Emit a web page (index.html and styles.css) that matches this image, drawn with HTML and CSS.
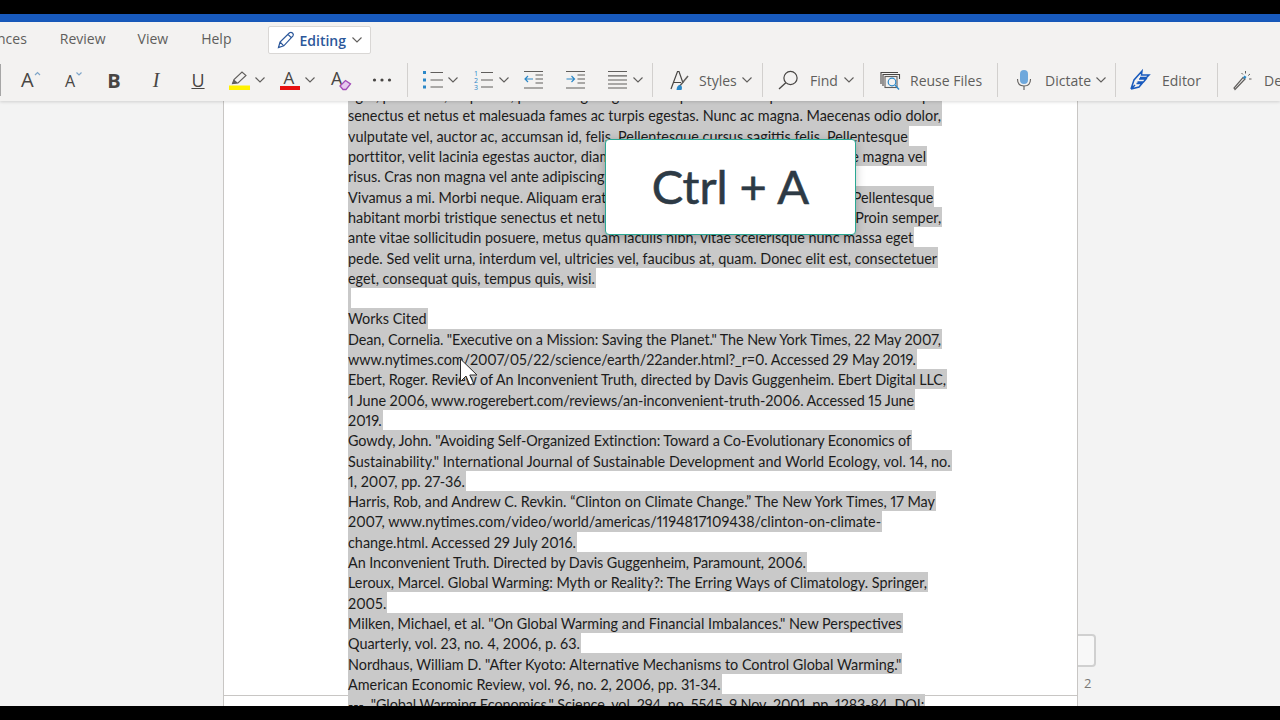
FILE: index.html
```html
<!DOCTYPE html>
<html lang="en">
<head>
    <meta charset="UTF-8">
    <title>Works Cited - Word</title>
    <link rel="stylesheet" href="styles.css">
</head>
<body>
    <svg class="defs">
        <symbol id="chev" viewBox="0 0 10 6"><polyline points="0.5,0.5 5,5 9.5,0.5" fill="none" stroke="#605e5c" stroke-width="1.1"/></symbol>
    </svg>

    <div class="topbar"></div>
    <div class="accent"></div>

    <header class="ribbon">
        <div class="tabs">
            <a href="#" class="tab tab-refs">nces</a>
            <a href="#" class="tab tab-review">Review</a>
            <a href="#" class="tab tab-view">View</a>
            <a href="#" class="tab tab-help">Help</a>
            <button class="editing">
                <svg class="edit-pen" viewBox="0 0 18 18" width="18" height="18"><path d="M1.5 16.5 L3 11 L12.5 1.8 Q14 0.8 15.5 2 Q17 3.5 16 5 L6.8 14.8 Z M3 11 L6.8 14.8 M11 3.4 L14.6 7" fill="none" stroke="#2b579a" stroke-width="1.2"/></svg>
                <span>Editing</span>
                <svg class="chev" width="10" height="6"><use href="#chev"/></svg>
            </button>
        </div>

        <div class="toolbar">
            <div class="fontbox"></div>
            <svg class="icon t-grow" viewBox="0 0 20 20"><text x="0" y="17" class="glyph" font-size="20">A</text><polyline points="14,5 16.5,2.5 19,5" fill="none" stroke="#7fa6c9" stroke-width="1.2"/></svg>
            <svg class="icon t-shrink" viewBox="0 0 20 20"><text x="3" y="17" class="glyph" font-size="16">A</text><polyline points="14.5,2.5 17,5 19.5,2.5" fill="none" stroke="#7fa6c9" stroke-width="1.2"/></svg>
            <span class="letter letter-b t-bold">B</span>
            <span class="letter letter-i t-italic">I</span>
            <span class="letter letter-u t-under">U</span>
            <svg class="icon t-mark" viewBox="0 0 21 20"><path d="M3.5 13.5 L5 9.5 L13 2 L17 5.5 L9 13 Z" fill="none" stroke="#605e5c" stroke-width="1.1"/><path d="M3.5 13.5 L5 9.5 L9 13 Z" fill="#605e5c"/><rect x="0" y="15.5" width="21" height="4.5" fill="#fff200"/></svg>
            <svg class="chev t-chev-mark" width="10" height="6"><use href="#chev"/></svg>
            <svg class="icon t-color" viewBox="0 0 20 20"><text x="3.5" y="13.5" class="glyph" font-size="17">A</text><rect x="0" y="16" width="20" height="4" fill="#e81010"/></svg>
            <svg class="chev t-chev-color" width="10" height="6"><use href="#chev"/></svg>
            <svg class="icon t-clear" viewBox="0 0 20 20"><text x="0" y="15" class="glyph" font-size="18">A</text><path d="M9 16 L14.5 10.5 L19.5 14 L15 19.5 L12 19.5 Z" fill="#e6c9ee" stroke="#a24bb8" stroke-width="1.3"/></svg>
            <svg class="icon t-more" viewBox="0 0 20 20"><circle cx="2.5" cy="10" r="1.6" fill="#484644"/><circle cx="10" cy="10" r="1.6" fill="#484644"/><circle cx="17.5" cy="10" r="1.6" fill="#484644"/></svg>
            <div class="sep t-sep-font"></div>
            <svg class="icon t-bullets" viewBox="0 0 20 20"><g fill="#2b88c8"><rect x="0" y="1" width="3" height="3"/><rect x="0" y="8.5" width="3" height="3"/><rect x="0" y="15.5" width="3" height="3"/></g><path d="M7.5 2.5 H20 M7.5 10 H20 M7.5 17 H20" stroke="#605e5c" stroke-width="1.2"/></svg>
            <svg class="chev t-chev-bullets" width="10" height="6"><use href="#chev"/></svg>
            <svg class="icon t-numbers" viewBox="0 0 20 20"><text x="0" y="6" class="tiny">1</text><text x="0" y="13" class="tiny">2</text><text x="0" y="20" class="tiny">3</text><path d="M7 2.5 H19 M7 10 H19 M7 17 H19" stroke="#605e5c" stroke-width="1.2"/></svg>
            <svg class="chev t-chev-numbers" width="10" height="6"><use href="#chev"/></svg>
            <svg class="icon t-outdent" viewBox="0 0 20 20"><path d="M0 1.5 H19 M11.5 5 H19 M11.5 9 H19 M11.5 13 H19 M0 18 H19" stroke="#605e5c" stroke-width="1.2"/><path d="M9 9 H1 M4 6 L1 9 L4 12" fill="none" stroke="#2b88c8" stroke-width="1.2"/></svg>
            <svg class="icon t-indent" viewBox="0 0 20 20"><path d="M0 1.5 H19 M11.5 5 H19 M11.5 9 H19 M11.5 13 H19 M0 18 H19" stroke="#605e5c" stroke-width="1.2"/><path d="M0.5 9 H8.5 M5.5 6 L8.5 9 L5.5 12" fill="none" stroke="#2b88c8" stroke-width="1.2"/></svg>
            <svg class="icon t-align" viewBox="0 0 20 20"><path d="M0 1.5 H19 M0 5.8 H19 M0 10 H19 M0 14 H19 M0 18 H19" stroke="#605e5c" stroke-width="1.2"/></svg>
            <svg class="chev t-chev-align" width="10" height="6"><use href="#chev"/></svg>
            <div class="sep t-sep-para"></div>
            <svg class="icon t-styles" viewBox="0 0 20 20"><path d="M2 19 L8.5 1.5 H10 L14 13 M4.5 12.5 H12" fill="none" stroke="#484644" stroke-width="1.2"/><path d="M10 17 L19 6" stroke="#605e5c" stroke-width="1.5"/><path d="M7.5 20 Q8 15 11 15 Q14 16 12.5 20 Z" fill="#2b88c8"/></svg>
            <span class="label lb-styles">Styles</span>
            <svg class="chev t-chev-styles" width="10" height="6"><use href="#chev"/></svg>
            <div class="sep t-sep-styles"></div>
            <svg class="icon t-find" viewBox="0 0 20 20"><circle cx="12.5" cy="8" r="6.6" fill="none" stroke="#484644" stroke-width="1.2"/><path d="M7.8 12.8 L1 19" stroke="#484644" stroke-width="1.3"/></svg>
            <span class="label lb-find">Find</span>
            <svg class="chev t-chev-find" width="10" height="6"><use href="#chev"/></svg>
            <div class="sep t-sep-find"></div>
            <svg class="icon t-reuse" viewBox="0 0 20 20"><path d="M1 14 V2.5 H18 M3 16 V4.5 H19.5 V9" fill="none" stroke="#484644" stroke-width="1.1"/><rect x="5" y="6.5" width="12" height="11" fill="none" stroke="#605e5c" stroke-width="1.1"/><circle cx="12" cy="12" r="3.8" fill="#f3f2f1" stroke="#2b88c8" stroke-width="1.2"/><path d="M15 15 L19 19.5" stroke="#2b88c8" stroke-width="1.3"/></svg>
            <span class="label lb-reuse">Reuse Files</span>
            <div class="sep t-sep-reuse"></div>
            <svg class="icon t-mic" viewBox="0 0 20 20"><rect x="6" y="0" width="8" height="14" rx="4" fill="#6fa8dc"/><path d="M3.5 9 Q3.5 16 10 16 Q16.5 16 16.5 9 M10 16 V20" fill="none" stroke="#605e5c" stroke-width="1.1"/></svg>
            <span class="label lb-dictate">Dictate</span>
            <svg class="chev t-chev-dictate" width="10" height="6"><use href="#chev"/></svg>
            <div class="sep t-sep-dictate"></div>
            <svg class="icon t-editor" viewBox="0 0 20 20"><path d="M1 19 L4 10 L12 1 L11.5 5 H19 L16.5 7.5 H10 M9 9 H16 L13.5 12 H7.5 M6.5 13.5 H12 L9 17 L1 19 M5 15 L1 19" fill="none" stroke="#185abd" stroke-width="1.5"/></svg>
            <span class="label lb-editor">Editor</span>
            <div class="sep t-sep-editor"></div>
            <svg class="icon t-wand" viewBox="0 0 20 20"><path d="M2 19.5 L1 18 L10 7.5 L12 9 Z" fill="#f3f2f1" stroke="#605e5c" stroke-width="1.2"/><path d="M10 7.5 L12 9 L13.5 7 L11.5 5.5 Z" fill="#2b88c8"/><path d="M12.5 1 V3.5 M17 4 L15.2 5.6 M18.5 9 H16 M8.5 3 L10 4.5" stroke="#605e5c" stroke-width="1"/></svg>
            <span class="label lb-design">De</span>
        </div>
    </header>

    <main class="doc">
        <div class="gutter-left"></div>
        <section class="page">
            <div class="lines">
                <p class="ln">eget, pulvinar a, aliquet ut, pede. Integer egestas tempor. Pellentesque habitant morbi tristique</p>
                <p class="ln">senectus et netus et malesuada fames ac turpis egestas. Nunc ac magna. Maecenas odio dolor,</p>
                <p class="ln">vulputate vel, auctor ac, accumsan id, felis. Pellentesque cursus sagittis felis. Pellentesque</p>
                <p class="ln ln-wide">porttitor, velit lacinia egestas auctor, diam eros tempus arcu, nec vulputate augue magna vel</p>
                <p class="ln">risus. Cras non magna vel ante adipiscing rhoncus.</p>
                <p class="ln">Vivamus a mi. Morbi neque. Aliquam erat volutpat. Integer ultrices lobortis eros. Pellentesque</p>
                <p class="ln">habitant morbi tristique senectus et netus et malesuada fames ac turpis egestas. Proin semper,</p>
                <p class="ln">ante vitae sollicitudin posuere, metus quam iaculis nibh, vitae scelerisque nunc massa eget</p>
                <p class="ln">pede. Sed velit urna, interdum vel, ultricies vel, faucibus at, quam. Donec elit est, consectetuer</p>
                <p class="ln">eget, consequat quis, tempus quis, wisi.</p>
                <p class="ln ln-blank"></p>
                <p class="ln">Works Cited</p>
                <p class="ln ln-tight">Dean, Cornelia. "Executive on a Mission: Saving the Planet." The New York Times, 22 May 2007,</p>
                <p class="ln ln-tight">www.nytimes.com/2007/05/22/science/earth/22ander.html?_r=0. Accessed 29 May 2019.</p>
                <p class="ln ln-tight">Ebert, Roger. Review of An Inconvenient Truth, directed by Davis Guggenheim. Ebert Digital LLC,</p>
                <p class="ln ln-tight">1 June 2006, www.rogerebert.com/reviews/an-inconvenient-truth-2006. Accessed 15 June</p>
                <p class="ln">2019.</p>
                <p class="ln ln-tight">Gowdy, John. "Avoiding Self-Organized Extinction: Toward a Co-Evolutionary Economics of</p>
                <p class="ln ln-wide">Sustainability." International Journal of Sustainable Development and World Ecology, vol. 14, no.</p>
                <p class="ln">1, 2007, pp. 27-36.</p>
                <p class="ln">Harris, Rob, and Andrew C. Revkin. “Clinton on Climate Change.” The New York Times, 17 May</p>
                <p class="ln">2007, www.nytimes.com/video/world/americas/1194817109438/clinton-on-climate-</p>
                <p class="ln">change.html. Accessed 29 July 2016.</p>
                <p class="ln ln-tight">An Inconvenient Truth. Directed by Davis Guggenheim, Paramount, 2006.</p>
                <p class="ln">Leroux, Marcel. Global Warming: Myth or Reality?: The Erring Ways of Climatology. Springer,</p>
                <p class="ln">2005.</p>
                <p class="ln">Milken, Michael, et al. "On Global Warming and Financial Imbalances." New Perspectives</p>
                <p class="ln">Quarterly, vol. 23, no. 4, 2006, p. 63.</p>
                <p class="ln">Nordhaus, William D. "After Kyoto: Alternative Mechanisms to Control Global Warming."</p>
                <p class="ln">American Economic Review, vol. 96, no. 2, 2006, pp. 31-34.</p>
                <p class="ln ln-tight">---. "Global Warming Economics." Science, vol. 294, no. 5545, 9 Nov. 2001, pp. 1283-84. DOI:</p>
            </div>
        </section>
        <aside class="gutter-right">
            <div class="page-tab"></div>
            <span class="page-num">2</span>
        </aside>
    </main>
    <div class="bottombar"></div>

    <div class="shortcut">Ctrl + A</div>

    <svg class="cursor" viewBox="0 0 18 28" width="18" height="29"><path d="M0.5 0.5 V23 L6 17.5 L9.8 26.5 L13.6 25 L9.8 16.5 L17 16.5 Z" fill="#fff" stroke="#2c2c2c" stroke-width="1"/></svg>
</body>
</html>
```

FILE: styles.css
```css
* {
    margin: 0;
    padding: 0;
    box-sizing: border-box;
}

html, body {
    width: 1280px;
    height: 720px;
    overflow: hidden;
}

body {
    background-color: #000;
    font-family: "Open Sans", sans-serif;
    display: flex;
    flex-direction: column;
}

.defs {
    display: none;
}

.topbar {
    height: 14px;
    background-color: #000;
}

.accent {
    height: 8px;
    background-color: #185abd;
}

/* Ribbon */
.ribbon {
    height: 79px;
    margin-bottom: -1px;
    background-color: #f3f2f1;
    box-shadow: 0 1px 3px rgba(0,0,0,0.15);
    position: relative;
    z-index: 2;
}

.tabs {
    height: 38px;
    display: flex;
    align-items: center;
    padding-bottom: 5px;
}

.tab {
    color: #605e5c;
    font-size: 14px;
    text-decoration: none;
}

.tab-refs { margin-left: -3px; }
.tab-review { margin-left: 33px; }
.tab-view { margin-left: 32px; }
.tab-help { margin-left: 33px; }

.editing {
    margin-left: 37px;
    margin-top: 3px;
    width: 103px;
    height: 28px;
    background-color: #fff;
    border: 1px solid #d9d7d5;
    border-radius: 2px;
    display: flex;
    align-items: center;
    padding-left: 8px;
    color: #2b579a;
    font-family: "Open Sans", sans-serif;
    font-size: 14px;
    font-weight: 600;
}

.editing span {
    margin-left: 4px;
}

.editing .chev {
    margin-left: 6px;
}

.toolbar {
    height: 40px;
    display: flex;
    align-items: center;
    color: #484644;
    font-size: 14px;
}

.fontbox {
    width: 2px;
    height: 32px;
    border: 1px solid #a6a6a6;
    border-left: none;
}

.icon {
    width: 20px;
    height: 20px;
    flex: none;
    overflow: visible;
}

.chev {
    width: 10px;
    height: 6px;
    flex: none;
}

.glyph {
    font-family: "Open Sans", sans-serif;
    fill: #484644;
}

.tiny {
    font-family: "Open Sans", sans-serif;
    font-size: 7px;
    fill: #2b88c8;
}

.letter {
    width: 20px;
    text-align: center;
    flex: none;
    color: #484644;
}

.letter-b {
    font-size: 20px;
    font-weight: 700;
}

.letter-i {
    font-family: "Liberation Serif", serif;
    font-size: 20px;
    font-style: italic;
}

.letter-u {
    font-size: 18px;
    text-decoration: underline;
}

.label {
    flex: none;
    color: #605e5c;
}

.sep {
    width: 1px;
    height: 34px;
    flex: none;
    background-color: #d2d0ce;
}

.t-grow { margin-left: 20px; }
.t-shrink { margin-left: 21px; }
.t-bold { margin-left: 22px; }
.t-italic { margin-left: 22px; }
.t-under { margin-left: 22px; }
.t-mark { margin-left: 21px; width: 21px; }
.t-chev-mark { margin-left: 5px; }
.t-color { margin-left: 15px; }
.t-chev-color { margin-left: 5px; }
.t-clear { margin-left: 16px; }
.t-more { margin-left: 21px; }
.t-sep-font { margin-left: 15px; }
.t-bullets { margin-left: 15px; }
.t-chev-bullets { margin-left: 5px; }
.t-numbers { margin-left: 16px; }
.t-chev-numbers { margin-left: 5px; }
.t-outdent { margin-left: 15px; }
.t-indent { margin-left: 22px; }
.t-align { margin-left: 22px; }
.t-chev-align { margin-left: 5px; }
.t-sep-para { margin-left: 9px; }
.t-styles { margin-left: 16px; }
.lb-styles { margin-left: 10px; width: 43px; }
.t-chev-styles { margin-left: 0; }
.t-sep-styles { margin-left: 10px; }
.t-find { margin-left: 15px; }
.lb-find { margin-left: 12px; width: 34px; }
.t-chev-find { margin-left: 0; }
.t-sep-find { margin-left: 9px; }
.t-reuse { margin-left: 16px; }
.lb-reuse { margin-left: 10px; width: 87px; }
.t-sep-reuse { margin-left: 0; }
.t-mic { margin-left: 16px; }
.lb-dictate { margin-left: 11px; width: 51px; }
.t-chev-dictate { margin-left: 0; }
.t-sep-dictate { margin-left: 9px; }
.t-editor { margin-left: 14px; }
.lb-editor { margin-left: 12px; width: 55px; }
.t-sep-editor { margin-left: 0; }
.t-wand { margin-left: 15px; }
.lb-design { margin-left: 11px; }

/* Document */
.doc {
    height: 606px;
    display: flex;
    background-color: #f3f3f3;
    overflow: hidden;
}

.gutter-left {
    width: 223px;
    flex: none;
}

.page {
    width: 855px;
    flex: none;
    background-color: #fff;
    background-image: linear-gradient(#c8c6c4, #c8c6c4);
    background-repeat: no-repeat;
    background-size: 100% 1px;
    background-position: 0 595px;
    border-left: 1px solid #c8c6c4;
    border-right: 1px solid #c8c6c4;
    padding-left: 124px;
}

.lines {
    margin-top: -15px;
}

.ln {
    width: fit-content;
    height: 20.3px;
    line-height: 20.3px;
    padding-top: 1.2px;
    padding-right: 1px;
    white-space: nowrap;
    background-color: #c9c9c9;
    color: #1c1c1c;
    font-family: Lato, sans-serif;
    font-size: 14.4px;
    font-variant-numeric: proportional-nums;
}

.ln-tight {
    letter-spacing: -0.08px;
}

.ln-wide {
    letter-spacing: 0.03px;
}

.ln-blank {
    width: 3px;
    padding: 0;
}

.gutter-right {
    flex: 1;
    padding-top: 534px;
    display: flex;
    flex-direction: column;
}

.page-tab {
    width: 18px;
    height: 33px;
    background-color: #f8f8f8;
    border: 2px solid #d0d0d0;
    border-left: none;
    border-radius: 0 4px 4px 0;
}

.page-num {
    margin-top: 7px;
    margin-left: 6px;
    font-size: 13px;
    color: #797775;
}

.bottombar {
    height: 14px;
    background-color: #000;
    position: relative;
    z-index: 1;
}

/* Overlays */
.shortcut {
    position: absolute;
    left: 605px;
    top: 139px;
    width: 251px;
    height: 96px;
    padding-bottom: 2px;
    display: flex;
    align-items: center;
    justify-content: center;
    background-color: #fff;
    border: 1.5px solid #2aa893;
    border-radius: 4px;
    box-shadow: 0 2px 10px rgba(0,0,0,0.25);
    color: #2d3a45;
    font-family: Lato, sans-serif;
    font-size: 47px;
    -webkit-text-stroke: 0.6px #2d3a45;
    z-index: 3;
}

.cursor {
    position: absolute;
    left: 460px;
    top: 358px;
    z-index: 4;
}
```
